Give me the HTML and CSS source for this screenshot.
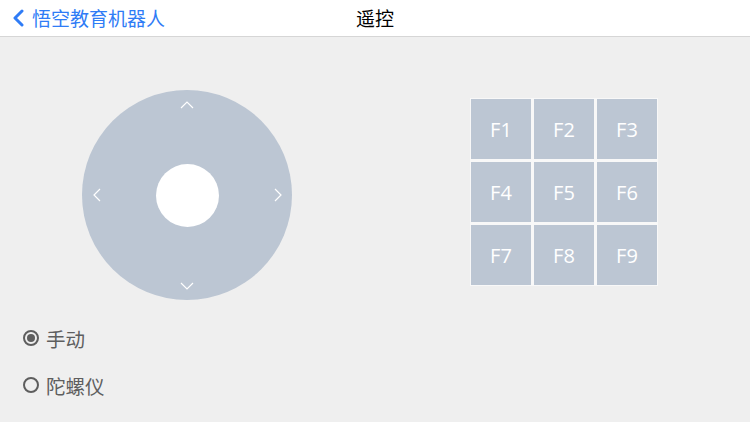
FILE: index.html
```html
<!DOCTYPE html>
<html lang="zh">
<head>
<meta charset="utf-8">
<title>遥控</title>
<link rel="stylesheet" href="styles.css">
</head>
<body>
<header class="nav">
  <a class="back">
    <svg class="back-icon" width="14" height="18" viewBox="0 0 14 18"><path d="M11 2 L4 9 L11 16" fill="none" stroke="#2f7cf6" stroke-width="3" stroke-linecap="round" stroke-linejoin="round"/></svg>
    <span>悟空教育机器人</span>
  </a>
  <div class="title">遥控</div>
</header>
<main class="main">
  <section class="left">
    <div class="pad">
      <svg class="arrow up" width="14" height="8" viewBox="0 0 14 8"><path d="M1 7 L7 1 L13 7" fill="none" stroke="#fff" stroke-width="1.2"/></svg>
      <svg class="arrow down" width="14" height="8" viewBox="0 0 14 8"><path d="M1 1 L7 7 L13 1" fill="none" stroke="#fff" stroke-width="1.2"/></svg>
      <svg class="arrow left-a" width="8" height="14" viewBox="0 0 8 14"><path d="M7 1 L1 7 L7 13" fill="none" stroke="#fff" stroke-width="1.2"/></svg>
      <svg class="arrow right-a" width="8" height="14" viewBox="0 0 8 14"><path d="M1 1 L7 7 L1 13" fill="none" stroke="#fff" stroke-width="1.2"/></svg>
      <div class="knob"></div>
    </div>
    <div class="radios">
      <div class="radio"><span class="dot on"></span><span>手动</span></div>
      <div class="radio"><span class="dot"></span><span>陀螺仪</span></div>
    </div>
  </section>
  <section class="grid">
    <div class="key">F1</div>
    <div class="key">F2</div>
    <div class="key">F3</div>
    <div class="key">F4</div>
    <div class="key">F5</div>
    <div class="key">F6</div>
    <div class="key">F7</div>
    <div class="key">F8</div>
    <div class="key">F9</div>
  </section>
</main>
</body>
</html>
```
FILE: styles.css
```css
html, body {
  margin: 0;
  padding: 0;
}
body {
  width: 750px;
  height: 422px;
  overflow: hidden;
  background: #efefef;
  font-family: "Noto Sans CJK SC", "Noto Sans", sans-serif;
}
.nav {
  height: 36px;
  background: #fff;
  border-bottom: 1px solid #d6d6d6;
  position: relative;
  display: flex;
  align-items: center;
}
.back {
  display: flex;
  align-items: center;
  padding-left: 11px;
  color: #2f7cf6;
  font-size: 19px;
  line-height: 36px;
}
.back-icon {
  margin-right: 7px;
}
.title {
  position: absolute;
  left: 0;
  right: 0;
  top: 0;
  text-align: center;
  font-size: 19px;
  line-height: 36px;
  color: #000;
}
.main {
  display: flex;
  align-items: flex-start;
}
.left {
  padding-left: 23px;
  width: 269px;
}
.pad {
  position: relative;
  width: 210px;
  height: 210px;
  border-radius: 50%;
  background: #bcc6d3;
  margin-left: 59px;
  margin-top: 53px;
  display: flex;
  align-items: center;
  justify-content: center;
}
.knob {
  width: 63px;
  height: 63px;
  border-radius: 50%;
  background: #fff;
}
.arrow {
  position: absolute;
}
.arrow.up { top: 11px; left: 98px; }
.arrow.down { bottom: 10px; left: 98px; }
.arrow.left-a { left: 11px; top: 98px; }
.arrow.right-a { right: 10px; top: 98px; }
.radios {
  margin-top: 26px;
  display: flex;
  flex-direction: column;
  gap: 23px;
}
.radio {
  display: flex;
  align-items: center;
  height: 24px;
  font-size: 19.5px;
  color: #5e5e5e;
}
.dot {
  box-sizing: border-box;
  width: 16px;
  height: 16px;
  border-radius: 50%;
  border: 2px solid #5e5e5e;
  margin-right: 7px;
  position: relative;
}
.dot.on::after {
  content: "";
  position: absolute;
  left: 2px;
  top: 2px;
  width: 8px;
  height: 8px;
  border-radius: 50%;
  background: #5e5e5e;
}
.grid {
  margin-left: 178px;
  margin-top: 61px;
  display: grid;
  grid-template-columns: repeat(3, 60px);
  grid-auto-rows: 60px;
  gap: 3px;
  padding: 1px;
  background: #f8f8f8;
}
.key {
  background: #bcc6d3;
  color: #fff;
  font-family: "Open Sans", sans-serif;
  font-size: 20px;
  display: flex;
  align-items: center;
  justify-content: center;
}
```
